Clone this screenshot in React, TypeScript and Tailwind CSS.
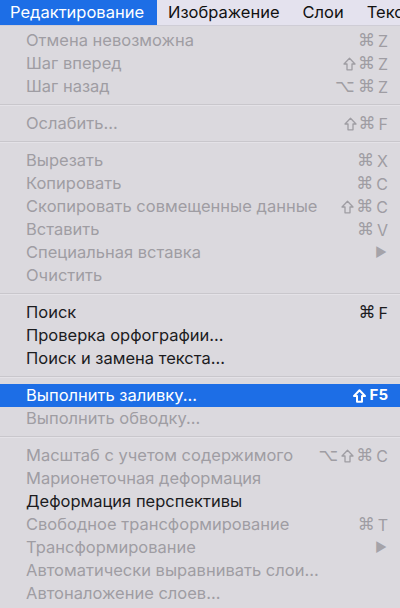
import React from 'react';

type Item = {
  label: string;
  shortcut?: string;
  submenu?: boolean;
  enabled?: boolean;
  active?: boolean;
};

type Entry = Item | 'sep';

const entries: Entry[] = [
  { label: 'Отмена невозможна', shortcut: '⌘Z' },
  { label: 'Шаг вперед', shortcut: '⇧⌘Z' },
  { label: 'Шаг назад', shortcut: '⌥⌘Z' },
  'sep',
  { label: 'Ослабить...', shortcut: '⇧⌘F' },
  'sep',
  { label: 'Вырезать', shortcut: '⌘X' },
  { label: 'Копировать', shortcut: '⌘C' },
  { label: 'Скопировать совмещенные данные', shortcut: '⇧⌘C' },
  { label: 'Вставить', shortcut: '⌘V' },
  { label: 'Специальная вставка', submenu: true },
  { label: 'Очистить' },
  'sep',
  { label: 'Поиск', shortcut: '⌘F', enabled: true },
  { label: 'Проверка орфографии...', enabled: true },
  { label: 'Поиск и замена текста...', enabled: true },
  'sep',
  { label: 'Выполнить заливку...', shortcut: '⇧F5', enabled: true, active: true },
  { label: 'Выполнить обводку...' },
  'sep',
  { label: 'Масштаб с учетом содержимого', shortcut: '⌥⇧⌘C' },
  { label: 'Марионеточная деформация' },
  { label: 'Деформация перспективы', enabled: true },
  { label: 'Свободное трансформирование', shortcut: '⌘T' },
  { label: 'Трансформирование', submenu: true },
  { label: 'Автоматически выравнивать слои...' },
  { label: 'Автоналожение слоев...' },
];

// hollow shift arrow
function ShiftIcon({ bold }: { bold?: boolean }) {
  return (
    <svg width="13" height="14" viewBox="0 0 13 14" className={bold ? 'mr-[4px]' : 'mr-[2px]'}>
      <path
        d="M6.5 1.2 L12 7 H9 V12.8 H4 V7 H1 Z"
        fill="none"
        stroke="currentColor"
        strokeWidth={bold ? 2 : 1.3}
        strokeLinejoin="round"
      />
    </svg>
  );
}

function Shortcut({ keys, active }: { keys: string; active?: boolean }) {
  return (
    <span className={`flex items-center ${active ? 'font-bold text-[15px]' : 'text-[16px]'}`}>
      {keys.split('').map((k, i) =>
        k === '⇧' ? (
          <ShiftIcon key={i} bold={active} />
        ) : k === '⌘' || k === '⌥' ? (
          <span
            key={i}
            className="mr-[3px] text-[17px] leading-none"
            style={{ fontFamily: '"DejaVu Sans", sans-serif' }}
          >
            {k}
          </span>
        ) : (
          <span key={i}>{k}</span>
        )
      )}
    </span>
  );
}

function Row({ item }: { item: Item }) {
  const color = item.active
    ? 'text-white'
    : item.enabled
    ? 'text-[#1c1c1e]'
    : 'text-[#9f9da3]';
  return (
    <div
      className={`h-[23px] flex items-center justify-between pl-[26px] pr-[12px] ${
        item.active ? 'bg-[#1d6ee6]' : ''
      } ${color}`}
    >
      <span className="truncate">{item.label}</span>
      {item.shortcut && <Shortcut keys={item.shortcut} active={item.active} />}
      {item.submenu && <span className="text-[13px] pr-[1px] text-[#a5a3a9]">▶</span>}
    </div>
  );
}

export default function App() {
  return (
    <div
      className="w-[400px] h-[608px] overflow-hidden bg-[#dbd9de] text-[16.5px]"
      style={{ fontFamily: 'Inter, "Noto Sans", sans-serif' }}
    >
      <div className="h-[26px] flex items-center bg-[#e4e2ee] border-b border-[#cfcdd6] text-[16.5px] text-[#111] whitespace-nowrap">
        <div className="h-full flex items-center px-[10px] bg-[#1d6ee6] text-white w-[157px] shrink-0">
          Редактирование
        </div>
        <div className="ml-[11px] shrink-0">Изображение</div>
        <div className="ml-[23px] shrink-0">Слои</div>
        <div className="ml-[23px] shrink-0">Текст</div>
      </div>
      <div className="pt-[3px]">
        {entries.map((e, i) =>
          e === 'sep' ? (
            <div key={i} className="h-[14px] flex items-center">
              <div className="w-full h-[2px] bg-[#c9c7cc] border-b border-[#e4e2e7]" />
            </div>
          ) : (
            <Row key={i} item={e} />
          )
        )}
      </div>
    </div>
  );
}
